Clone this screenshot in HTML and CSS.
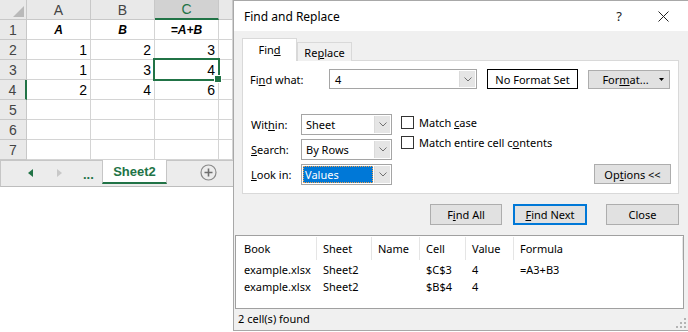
FILE: index.html
```html
<!DOCTYPE html>
<html>
<head>
	<meta charset="UTF-8">
	<title>Find and Replace</title>
	<link rel="stylesheet" href="styles.css">
</head>
<body>
<div class="screen">

	<section class="workbook">
		<div class="grid">
			<div class="hd corner"><svg width="11" height="11" viewBox="0 0 11 11"><polygon points="11,0 11,11 0,11" fill="#b9b9b9"/></svg></div>
			<div class="hd col">A</div>
			<div class="hd col">B</div>
			<div class="hd col sel">C</div>
			<div class="hd col"></div>

			<div class="hd row">1</div>
			<div class="c title">A</div>
			<div class="c title">B</div>
			<div class="c title">=A+B</div>
			<div class="c"></div>

			<div class="hd row">2</div>
			<div class="c num">1</div>
			<div class="c num">2</div>
			<div class="c num">3</div>
			<div class="c"></div>

			<div class="hd row">3</div>
			<div class="c num">1</div>
			<div class="c num">3</div>
			<div class="c num active">4</div>
			<div class="c"></div>

			<div class="hd row mark">4</div>
			<div class="c num">2</div>
			<div class="c num">4</div>
			<div class="c num">6</div>
			<div class="c"></div>

			<div class="hd row">5</div>
			<div class="c"></div><div class="c"></div><div class="c"></div><div class="c"></div>
			<div class="hd row">6</div>
			<div class="c"></div><div class="c"></div><div class="c"></div><div class="c"></div>
			<div class="hd row">7</div>
			<div class="c"></div><div class="c"></div><div class="c"></div><div class="c"></div>
		</div>

		<div class="sheet-tabs">
			<span class="nav prev"><svg width="5" height="8" viewBox="0 0 5 8"><polygon points="5,0 5,8 0,4" fill="#217346"/></svg></span>
			<span class="nav next"><svg width="5" height="8" viewBox="0 0 5 8"><polygon points="0,0 0,8 5,4" fill="#c8c8c8"/></svg></span>
			<span class="more">...</span>
			<span class="tab">Sheet2</span>
			<span class="add"><svg width="17" height="17" viewBox="0 0 17 17"><circle cx="8.5" cy="8.5" r="7.5" fill="none" stroke="#8a8a8a" stroke-width="1.2"/><path d="M8.5 4.5v8M4.5 8.5h8" stroke="#6e6e6e" stroke-width="1.6"/></svg></span>
		</div>
		<div class="sheet-blank"></div>
	</section>

	<section class="dialog">
		<div class="titlebar">
			<span class="title">Find and Replace</span>
			<span class="help">?</span>
			<span class="close-x"><svg width="11" height="11" viewBox="0 0 11 11"><path d="M0.5 0.5l10 10M10.5 0.5l-10 10" stroke="#222" stroke-width="1"/></svg></span>
		</div>

		<div class="main">
			<div class="tabstrip">
				<span class="dtab on"><span>Fin<u>d</u></span></span>
				<span class="dtab"><span>Re<u>p</u>lace</span></span>
			</div>

			<div class="panel">
				<div class="find-row">
					<label class="lbl-find">Fi<u>n</u>d what:</label>
					<div class="combo wide">
						<span class="val">4</span>
						<span class="drop"><svg width="8" height="5" viewBox="0 0 8 5"><polyline points="0.5,0.5 4,4 7.5,0.5" fill="none" stroke="#707070"/></svg></span>
					</div>
					<div class="noformat">No Format Set</div>
					<div class="btn format"><span>For<u>m</u>at...</span><svg width="5" height="3" viewBox="0 0 5 3"><polygon points="0,0 5,0 2.5,3" fill="#000"/></svg></div>
				</div>

				<div class="options">
					<div class="fields">
						<label><span>Wit<u>h</u>in:</span></label>
						<div class="combo"><span class="val">Sheet</span><span class="drop"><svg width="8" height="5" viewBox="0 0 8 5"><polyline points="0.5,0.5 4,4 7.5,0.5" fill="none" stroke="#707070"/></svg></span></div>
						<label><span><u>S</u>earch:</span></label>
						<div class="combo"><span class="val">By Rows</span><span class="drop"><svg width="8" height="5" viewBox="0 0 8 5"><polyline points="0.5,0.5 4,4 7.5,0.5" fill="none" stroke="#707070"/></svg></span></div>
						<label><span><u>L</u>ook in:</span></label>
						<div class="combo"><span class="val picked">Values</span><span class="drop"><svg width="8" height="5" viewBox="0 0 8 5"><polyline points="0.5,0.5 4,4 7.5,0.5" fill="none" stroke="#707070"/></svg></span></div>
					</div>
					<div class="checks">
						<div class="check"><span class="box"></span><span>Match <u>c</u>ase</span></div>
						<div class="check"><span class="box"></span><span>Match entire cell c<u>o</u>ntents</span></div>
					</div>
					<div class="btn opts"><span>Op<u>t</u>ions &lt;&lt;</span></div>
				</div>
			</div>

			<div class="actions">
				<div class="btn find-all"><span>F<u>i</u>nd All</span></div>
				<div class="btn find-next"><span><u>F</u>ind Next</span></div>
				<div class="btn close"><span>Close</span></div>
			</div>
		</div>

		<div class="results">
			<div class="rgrid">
				<div class="rh first">Book</div>
				<div class="rh">Sheet</div>
				<div class="rh">Name</div>
				<div class="rh">Cell</div>
				<div class="rh">Value</div>
				<div class="rh">Formula</div>

				<div class="rc first">example.xlsx</div>
				<div class="rc">Sheet2</div>
				<div class="rc"></div>
				<div class="rc">$C$3</div>
				<div class="rc">4</div>
				<div class="rc">=A3+B3</div>

				<div class="rc first">example.xlsx</div>
				<div class="rc">Sheet2</div>
				<div class="rc"></div>
				<div class="rc">$B$4</div>
				<div class="rc">4</div>
				<div class="rc"></div>
			</div>
		</div>

		<div class="status">
			<span>2 cell(s) found</span>
			<svg class="grip" width="10" height="10" viewBox="0 0 10 10">
				<rect x="8" y="0" width="2" height="2" fill="#b4b4b4"/>
				<rect x="4" y="4" width="2" height="2" fill="#b4b4b4"/>
				<rect x="8" y="4" width="2" height="2" fill="#b4b4b4"/>
				<rect x="0" y="8" width="2" height="2" fill="#b4b4b4"/>
				<rect x="4" y="8" width="2" height="2" fill="#b4b4b4"/>
				<rect x="8" y="8" width="2" height="2" fill="#b4b4b4"/>
			</svg>
		</div>
	</section>

</div>
</body>
</html>
```

FILE: styles.css
```css
:root {
	--xl-green: #217346;
	--grid-line: #d4d4d4;
	--head-bg: #e9e9e9;
	--dlg-bg: #f0f0f0;
	--btn-bg: #e1e1e1;
	--btn-border: #adadad;
}
* {
	box-sizing: border-box;
}
body {
	margin: 0;
	padding: 0;
	overflow: hidden;
	background: #fff;
}
.screen {
	display: flex;
	width: 688px;
	height: 332px;
}

/* ---------- workbook ---------- */
.workbook {
	width: 233px;
	display: flex;
	flex-direction: column;
	font-family: "Liberation Sans", Arial, sans-serif;
	font-size: 14px;
	color: #000;
}
.grid {
	display: grid;
	grid-template-columns: 27px 64px 64px 64px 14px;
	grid-auto-rows: 20px;
}
.grid > div {
	border-right: 1px solid var(--grid-line);
	border-bottom: 1px solid var(--grid-line);
	display: flex;
	align-items: center;
}
.hd {
	background: var(--head-bg);
	color: #444;
	justify-content: center;
}
.grid > .hd {
	border-color: #c8c8c8;
}
.corner {
	justify-content: flex-end !important;
	align-items: flex-end !important;
	padding: 0 2px 2px 0;
}
.col.sel {
	background: #d2d2d2;
	color: var(--xl-green);
	border-bottom: 2px solid var(--xl-green) !important;
}
.row.mark {
	border-right: 2px solid var(--xl-green) !important;
}
.c.title {
	justify-content: center;
	font-weight: bold;
	font-style: italic;
}
.c.num {
	justify-content: flex-end;
	padding-right: 3px;
}
.c.active {
	position: relative;
}
.c.active::before {
	content: "";
	position: absolute;
	left: -2px;
	top: -2px;
	right: -2px;
	bottom: -2px;
	border: 2px solid var(--xl-green);
}
.c.active::after {
	content: "";
	position: absolute;
	right: -4px;
	bottom: -4px;
	width: 6px;
	height: 6px;
	background: var(--xl-green);
	border: 1px solid #fff;
}

.sheet-tabs {
	height: 27px;
	background: #ececec;
	border-top: 1px solid #c6c6c6;
	border-left: 1px solid #c6c6c6;
	border-bottom: 1px solid #bdbdbd;
	display: flex;
	align-items: stretch;
	padding-bottom: 2px;
}
.nav {
	display: flex;
	align-items: center;
	width: 6px;
}
.nav.prev {
	margin-left: 27px;
}
.nav.next {
	margin-left: 23px;
}
.more {
	margin-left: 20px;
	width: 14px;
	color: var(--xl-green);
	font-weight: bold;
	font-size: 13px;
	display: flex;
	align-items: center;
	padding-top: 3px;
}
.tab {
	margin-left: 5px;
	width: 65px;
	margin-top: -1px;
	background: #fff;
	border-left: 1px solid #c6c6c6;
	border-right: 1px solid #c6c6c6;
	border-bottom: 2px solid var(--xl-green);
	color: var(--xl-green);
	font-weight: bold;
	font-size: 13px;
	display: flex;
	align-items: center;
	justify-content: center;
}
.add {
	margin-left: 33px;
	display: flex;
	align-items: center;
}
.sheet-blank {
	flex: 1;
	background: #fff;
}

/* ---------- dialog ---------- */
.dialog {
	width: 455px;
	height: 331px;
	border: 1px solid #a8a8a8;
	border-right: none;
	background: var(--dlg-bg);
	display: flex;
	flex-direction: column;
	font-family: "Noto Sans", "Open Sans", sans-serif;
	font-size: 11px;
	color: #000;
}
.titlebar {
	height: 30px;
	background: #fff;
	display: flex;
	align-items: center;
	padding-left: 10px;
}
.title {
	font-size: 12px;
	flex: 1;
}
.help {
	font-size: 13px;
	margin-right: 36px;
	color: #222;
}
.close-x {
	display: flex;
	margin-right: 19px;
}

.main {
	padding: 7px 9px 0 8px;
}
.tabstrip {
	display: flex;
	align-items: flex-end;
	margin-bottom: -1px;
}
.dtab {
	width: 55px;
	height: 19px;
	border: 1px solid #d9d9d9;
	border-bottom: none;
	display: flex;
	align-items: center;
	justify-content: center;
	background: var(--dlg-bg);
}
.dtab.on {
	height: 23px;
	background: #fff;
	position: relative;
	z-index: 1;
	padding-bottom: 2px;
}
.panel {
	height: 134px;
	background: #fff;
	border: 1px solid #d9d9d9;
	padding: 8px 7px;
}
.find-row {
	display: flex;
	align-items: center;
	height: 20px;
}
.lbl-find {
	width: 79px;
}
.combo {
	width: 91px;
	height: 21px;
	border: 1px solid #a5a5a5;
	background: #fff;
	display: flex;
	align-items: stretch;
	padding: 1px;
}
.combo.wide {
	width: 148px;
	height: 20px;
}
.val {
	flex: 1;
	padding-left: 3px;
	display: flex;
	align-items: center;
}
.wide .val {
	padding-left: 4px;
}
.val.picked {
	background: #0078d7;
	color: #fff;
	border: 1px dotted #f0a050;
	margin-right: 1px;
	padding-left: 1px;
}
.drop {
	width: 16px;
	background: #e5e5e5;
	border-left: 1px solid #dadada;
	display: flex;
	align-items: center;
	justify-content: center;
}
.noformat {
	margin-left: 10px;
	width: 91px;
	height: 20px;
	border: 1px solid #000;
	display: flex;
	align-items: center;
	justify-content: center;
}
.btn {
	background: var(--btn-bg);
	border: 1px solid var(--btn-border);
	display: flex;
	align-items: center;
	justify-content: center;
}
.format {
	margin-left: 10px;
	width: 82px;
	height: 19px;
	gap: 10px;
	padding-left: 8px;
}

.options {
	display: flex;
	margin-top: 25px;
}
.fields {
	display: grid;
	grid-template-columns: 51px 91px;
	grid-auto-rows: 21px;
	row-gap: 4px;
}
.fields label {
	display: flex;
	align-items: center;
	padding-left: 1px;
}
.checks {
	margin-left: 9px;
	display: flex;
	flex-direction: column;
	gap: 6px;
	padding-top: 1px;
}
.check {
	display: flex;
	align-items: center;
	gap: 5px;
	height: 14px;
}
.box {
	width: 13px;
	height: 13px;
	border: 1px solid #333;
	background: #fff;
}
.opts {
	margin-left: auto;
	align-self: flex-end;
	width: 77px;
	height: 20px;
	margin-bottom: 1px;
}

.actions {
	display: flex;
	justify-content: flex-end;
	margin-top: 10px;
	height: 21px;
}
.actions .btn {
	width: 73px;
}
.find-all {
	width: 72px !important;
}
.find-next {
	margin-left: 11px;
	width: 74px !important;
	border: 2px solid #0078d7 !important;
}
.close {
	margin-left: 19px;
}

.results {
	margin: 10px 4px 0 1px;
	height: 74px;
	background: #fff;
	border: 1px solid #a0a0a0;
}
.rgrid {
	display: grid;
	grid-template-columns: 81px 55px 48px 46px 48px 1fr;
	grid-template-rows: 25px 17px 17px;
}
.rh {
	display: flex;
	align-items: center;
	padding-left: 6px;
	border-right: 1px solid #e5e5e5;
	margin: 1px 0;
}
.rc {
	display: flex;
	align-items: center;
	padding-left: 6px;
}
.rh.first,
.rc.first {
	padding-left: 8px;
}

.status {
	flex: 1;
	display: flex;
	align-items: center;
	padding: 0 2px 2px 4px;
}
.status span {
	flex: 1;
}
.grip {
	align-self: flex-end;
}
```
